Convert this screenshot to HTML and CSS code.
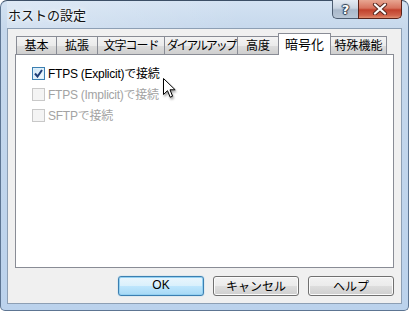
FILE: index.html
```
<!DOCTYPE html>
<html lang="ja">
<head>
<meta charset="utf-8">
<title>ホストの設定</title>
<link rel="stylesheet" href="styles.css">
</head>
<body>
<div class="window">
  <div class="titlebar">
    <span class="title">ホストの設定</span>
    <div class="caption-buttons">
      <div class="cbtn help"><span>?</span></div>
      <div class="cbtn close">
        <svg width="16" height="12" viewBox="0 0 16 12"><path d="M3 1.5 L13 10.5 M13 1.5 L3 10.5" stroke="#5a2a22" stroke-width="4.2" stroke-linecap="round"/><path d="M3 1.5 L13 10.5 M13 1.5 L3 10.5" stroke="#ffffff" stroke-width="2.2" stroke-linecap="round"/></svg>
      </div>
    </div>
  </div>
  <div class="client">
    <div class="tabs">
      <div class="tab tab-kihon">基本</div>
      <div class="tab tab-kakucho">拡張</div>
      <div class="tab tab-moji">文字コード</div>
      <div class="tab tab-dial">ダイアルアップ</div>
      <div class="tab tab-kodo">高度</div>
      <div class="tab tab-ango selected">暗号化</div>
      <div class="tab tab-tokushu">特殊機能</div>
    </div>
    <div class="panel">
      <div class="opt">
        <span class="cb checked"><svg width="9" height="9" viewBox="0 0 9 9"><path d="M1 4.5 L3.5 7.5 L8 1" fill="none" stroke="#1f3f78" stroke-width="2"/></svg></span>
        <span class="label">FTPS (Explicit)で接続</span>
      </div>
      <div class="opt disabled">
        <span class="cb"></span>
        <span class="label">FTPS (Implicit)で接続</span>
      </div>
      <div class="opt disabled">
        <span class="cb"></span>
        <span class="label">SFTPで接続</span>
      </div>
    </div>
    <div class="buttons">
      <div class="btn default">OK</div>
      <div class="btn">キャンセル</div>
      <div class="btn">ヘルプ</div>
    </div>
  </div>
  <svg class="cursor" width="14" height="21" viewBox="0 0 14 21"><path d="M0.5 0.5 L0.5 16.5 L4.5 12.7 L7.2 19.2 L9.6 18.2 L7 11.8 L12.2 11.8 Z" fill="#ffffff" stroke="#000000" stroke-width="1" stroke-linejoin="miter"/></svg>
</div>
</body>
</html>
```
FILE: styles.css
```
* { box-sizing: border-box; }
html, body { margin: 0; padding: 0; }
body {
  width: 409px;
  height: 311px;
  overflow: hidden;
  background: #ffffff;
  font-family: "Liberation Sans", "Noto Sans CJK JP", sans-serif;
  font-size: 12px;
  color: #000;
}
.window {
  position: relative;
  width: 409px;
  height: 311px;
  border: 1px solid #5d7592;
  border-top-color: #3c4f66;
  border-radius: 7px 7px 5px 5px;
  background: linear-gradient(to bottom, #d3e2f2 0px, #c6d8ec 28px, #bbd2ec 100%);
  padding: 0 6px 6px 6px;
  display: flex;
  flex-direction: column;
}
.titlebar {
  height: 27px;
  display: flex;
  align-items: flex-start;
  background: linear-gradient(to right, rgba(255,255,255,0.25), rgba(255,255,255,0) 60%);
}
.title {
  margin: 6px 0 0 1px;
  font-family: "Noto Sans CJK JP", sans-serif;
  font-size: 13px;
  line-height: 16px;
  color: #111;
  text-shadow: 0 0 6px rgba(255,255,255,0.9), 0 0 3px rgba(255,255,255,0.9);
}
.caption-buttons {
  margin-left: auto;
  display: flex;
  margin-top: -1px;
}
.cbtn {
  height: 19px;
  display: flex;
  align-items: center;
  justify-content: center;
  border: 1px solid #4d5d71;
  border-top: none;
}
.help {
  width: 26px;
  border-right: none;
  border-radius: 0 0 0 5px;
  background: linear-gradient(to bottom, #e4ebf3 0%, #c9d4e1 45%, #a9b8ca 55%, #b8c6d6 100%);
}
.help span {
  font-family: "DejaVu Sans", sans-serif;
  font-weight: bold;
  font-size: 13px;
  line-height: 13px;
  color: #ffffff;
  text-shadow: 0 0 1px #2e3d50, 1px 0 1px #2e3d50, -1px 0 1px #2e3d50, 0 1px 1px #2e3d50, 0 -1px 1px #2e3d50;
}
.close {
  width: 44px;
  border-radius: 0 0 5px 0;
  border-color: #5a2219;
  background: linear-gradient(to bottom, #e8a692 0%, #d7735e 45%, #c1412c 55%, #d0624a 85%, #e08e70 100%);
}
.client {
  flex: 1;
  background: #f0f0f0;
  border: 1px solid #8d9fb4;
  display: flex;
  flex-direction: column;
}
.tabs {
  display: flex;
  align-items: flex-end;
  margin: 4px 0 -1px 8px;
  height: 22px;
  position: relative;
  z-index: 1;
}
.tab {
  height: 18px;
  margin-bottom: 1px;
  margin-right: -1px;
  border: 1px solid #898c95;
  border-bottom: none;
  background: linear-gradient(to bottom, #f3f3f3 0%, #ebebeb 50%, #dddddd 51%, #cfcfcf 100%);
  font-family: "Noto Sans CJK JP", sans-serif;
  font-size: 12px;
  line-height: 16px;
  text-align: center;
  white-space: nowrap;
  overflow: hidden;
}
.tab.selected {
  height: 22px;
  margin-bottom: 0;
  background: #ffffff;
  position: relative;
  z-index: 2;
  font-size: 13px;
  line-height: 20px;
}
.tab-kihon { width: 41px; }
.tab-kakucho { width: 42px; }
.tab-moji { width: 68px; letter-spacing: -1px; }
.tab-dial { width: 74px; letter-spacing: -2.2px; }
.tab-kodo { width: 42px; }
.tab-ango { width: 53px; }
.tab-tokushu { width: 57px; }
.panel {
  margin: 0 7px 0 7px;
  height: 214px;
  background: #ffffff;
  border: 1px solid #898c95;
  padding: 8px 0 0 16px;
}
.opt {
  height: 21px;
  display: flex;
  align-items: center;
}
.cb {
  width: 13px;
  height: 13px;
  border: 1px solid #8f8f8f;
  background: linear-gradient(135deg, #dcdcdc 0%, #f6f6f6 80%);
  box-shadow: inset 0 0 0 1px #f4f4f4;
  display: flex;
  align-items: center;
  justify-content: center;
}
.cb.checked {
  border-color: #3c7fb1;
  background: linear-gradient(135deg, #cbe5f7 0%, #eef7fd 80%);
  box-shadow: inset 0 0 0 1px #def0fb;
}
.label {
  margin-left: 3px;
  line-height: 14px;
  letter-spacing: -0.25px;
}
.opt.disabled .cb {
  border-color: #c8c8c8;
  background: #f4f4f4;
  box-shadow: none;
}
.opt.disabled .label {
  color: #a3a3a3;
}
.buttons {
  display: flex;
  justify-content: flex-end;
  gap: 9px;
  margin: 8px 7px 0 0;
}
.btn {
  width: 86px;
  height: 20px;
  border: 1px solid #707070;
  border-radius: 3px;
  background: linear-gradient(to bottom, #f2f2f2 0%, #ebebeb 50%, #dddddd 51%, #cfcfcf 100%);
  box-shadow: inset 0 0 0 1px #fbfbfb;
  font-family: "Noto Sans CJK JP", sans-serif;
  font-size: 12px;
  line-height: 17px;
  text-align: center;
}
.btn.default {
  border-color: #3c7fb1;
  box-shadow: inset 0 0 0 1px #94d1f2, 0 0 1px #48a8e0;
  background: linear-gradient(to bottom, #eaf6fd 0%, #d9f0fc 50%, #bee6fd 51%, #a7d9f5 100%);
  font-family: "Liberation Sans", sans-serif;
}
.cursor {
  position: absolute;
  left: 162px;
  top: 77px;
  filter: drop-shadow(1px 2px 1px rgba(0,0,0,0.35));
}
```
